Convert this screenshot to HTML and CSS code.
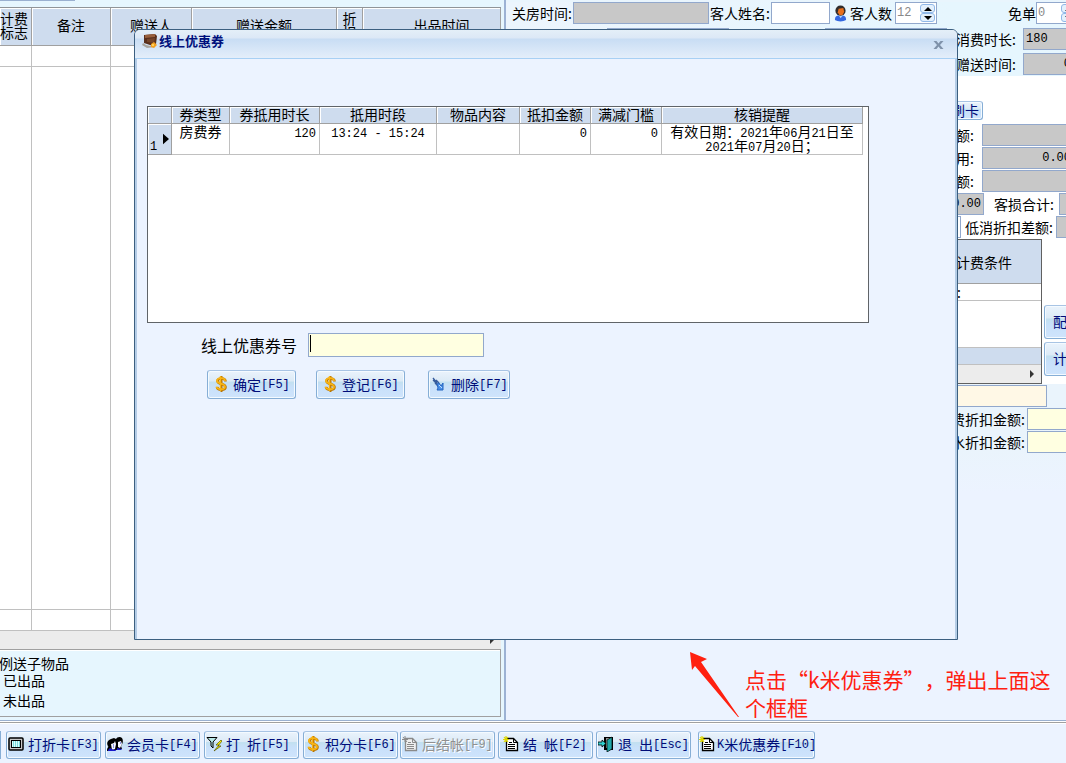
FILE: index.html
```html
<!DOCTYPE html>
<html lang="zh-CN">
<head>
<meta charset="utf-8">
<title>线上优惠券</title>
<link rel="stylesheet" href="styles.css">
</head>
<body>
<svg class="sprite" aria-hidden="true">
  <symbol id="dollar" viewBox="0 0 16 16">
    <path d="M8.500 0v16" stroke="#b87400" stroke-width="2"/>
    <path d="M12.500 5.500C12.500 1.500 4.500 1.500 4.500 5c0 3.500 8 2.500 8 6 0 3.500-8 3.500-8.500 0" fill="none" stroke="#b87400" stroke-width="2.600"/>
    <path d="M7.500 0v15" stroke="#f8b414" stroke-width="1.400"/>
    <path d="M12 5C12 1.300 4 1.300 4 4.700c0 3.500 8 2.500 8 6 0 3.400-8 3.400-8.500 0" fill="none" stroke="#f8b414" stroke-width="1.800"/>
  </symbol>
  <symbol id="erase" viewBox="0 0 16 16">
    <path d="M2 2l4 5M2 4l4 4M4 7l3 3M5 4l3 3" stroke="#355b9c" stroke-width="1.300"/>
    <path d="M6 8l2-1 2 3 2-3v7H6l1-2z" fill="#4a90e8" stroke="#2464c0"/>
    <path d="M8 9l3 3" stroke="#bfe0ff"/>
  </symbol>
  <symbol id="screen" viewBox="0 0 16 16">
    <rect x="1" y="2" width="14" height="12" rx="1" fill="#c8c8c8" stroke="#000" stroke-width="1.500"/>
    <rect x="3.500" y="4.500" width="9" height="7" fill="#d8ffff" stroke="#000"/>
    <path d="M5 6h7M5 8h7M5 10h7" stroke="#20b8b8" stroke-dasharray="1 1"/>
  </symbol>
  <symbol id="people" viewBox="0 0 16 16">
    <path d="M0 14c0-2 2-3 1-4-2-3 0-6 3-7l3-1 2 1c1-2 4-3 6-1 2 3 0 7-1 8l1 3-6 1-9 1z" fill="#000"/>
    <path d="M4 8l3-1 1-2 1 3-1 5-3 1zM11 6l3-1 1 3-2 4-2-1z" fill="#f8f8ff"/>
    <path d="M1 14l2-2 4 2 1-1 1 2H1zM10 12l5 1-1 1h-4z" fill="#1818c8"/>
    <path d="M6 9h1M13 7h1M6 11h1" stroke="#2038d0"/>
  </symbol>
  <symbol id="filter" viewBox="0 0 16 16">
    <path d="M1 1.500h10L7 6v6L5 10V6z" fill="#b8e8e8" stroke="#000"/>
    <path d="M15 4l-5 5h3l-5 6 7-5h-3l4-5z" fill="#ffee00" stroke="#555500" stroke-width=".7"/>
  </symbol>
  <symbol id="doc" viewBox="0 0 16 16">
    <path d="M3.500 2.500h7l4 4v8h-11z" fill="#fff" stroke="#000" stroke-width="1.300"/>
    <path d="M10.500 2v4.500H15M6 6.500h3M5 8.500h7M5 10.500h7M5 12.500h7" fill="none" stroke="#000"/>
    <path d="M0 3.500h6M3 0v6M1 1l4 5M5 1L1 6" stroke="#e0d800" stroke-width="1.200"/>
  </symbol>
  <symbol id="doc-off" viewBox="0 0 16 16">
    <path d="M3.500 2.500h7l4 4v8h-11z" fill="#f0f0f0" stroke="#8a8a8a" stroke-width="1.300"/>
    <path d="M10.500 2v4.500H15M6 6.500h3M5 8.500h7M5 10.500h7M5 12.500h7M0 3.500h6M3 0v6M1 1l4 5" fill="none" stroke="#8a8a8a"/>
  </symbol>
  <symbol id="exit" viewBox="0 0 16 16">
    <path d="M6 1h9v13H6z" fill="#000"/>
    <path d="M8 2h5v10H8z" fill="#909090"/>
    <path d="M9 4l5-3v12l-5 3z" fill="#20a8a8" stroke="#000" stroke-width=".7"/>
    <path d="M0 6h4V4l4 3.500L4 11V9H0z" fill="#30d0d0" stroke="#000" stroke-width=".8"/>
  </symbol>
  <symbol id="person" viewBox="0 0 14 18">
    <path d="M1 16c0-4 2-5 6-5s6 1 6 5c-3 2-9 2-12 0z" fill="#3468e0"/>
    <path d="M5 11l2 3 3-3z" fill="#a8d0ff"/>
    <circle cx="7" cy="6" r="5.500" fill="#302c2c"/>
    <path d="M5 4l5-1 1 4-2 4H6L4 8z" fill="#e8701c"/>
  </symbol>
  <symbol id="wallet" viewBox="0 0 16 16">
    <path d="M1 10l3 2 9 2-8 1-5-3z" fill="#a8a49c"/>
    <path d="M2 2l11-1 2 2-1 8-3 2-9-3z" fill="#59301c"/>
    <path d="M3 2l10-1v3L3 5z" fill="#99603c"/>
    <path d="M5 6l8-1-1 5-7-1z" fill="#75452a"/>
    <path d="M9 11l3-2 3 3-3 3-3-1z" fill="#f4a020"/>
    <circle cx="11" cy="12" r="1" fill="#ffe070"/>
  </symbol>
</svg>

<main class="workspace">
  <section class="orders">
    <div class="strip"></div>
    <table class="order-table">
      <colgroup><col class="o-flag"><col class="o-note"><col class="o-who"><col class="o-sum"><col class="o-cut"><col></colgroup>
      <thead><tr><th class="flag">计费<br>标志</th><th>备注</th><th>赠送人</th><th>赠送金额</th><th>折<br>扣</th><th class="served">出品时间</th></tr></thead>
      <tbody>
        <tr class="slim"><td></td><td></td><td></td><td></td><td></td><td></td></tr>
        <tr><td></td><td></td><td></td><td></td><td></td><td></td></tr>
        <tr class="slim"><td></td><td></td><td></td><td></td><td></td><td></td></tr>
      </tbody>
    </table>
    <div class="scroll"><svg viewBox="0 0 6 8"><path d="M1 0l4 4-4 4z"/></svg></div>
    <div class="legend"><p class="first">例送子物品</p><p>已出品</p><p>未出品</p></div>
  </section>

  <section class="bill">
    <div class="guest">
      <label for="close">关房时间:</label><input id="close" class="box grey close" readonly>
      <label for="name">客人姓名:</label><input id="name" class="box name">
      <svg class="person"><use href="#person"/></svg>
      <label for="count">客人数</label>
      <span class="box spin"><input id="count" value="12"><span class="steps"><button class="up" aria-label="增加"></button><button class="down" aria-label="减少"></button></span></span>
      <label for="free" class="push">免单</label>
      <span class="box spin"><input id="free" value="0"><span class="steps"><button class="up" aria-label="增加"></button><button class="down" aria-label="减少"></button></span></span>
    </div>
    <div class="times">
      <div class="under"><input class="box grey" aria-label="时间" readonly><input class="box grey" aria-label="时长" readonly></div>
      <div class="line wide"><label for="used">消费时长:</label><input id="used" class="box grey" value="180" readonly></div>
      <div class="line wide"><label for="gift">赠送时间:</label><input id="gift" class="box grey num" value="0" readonly></div>
    </div>
    <div class="sums">
      <div class="line"><button class="btn swipe">刷卡</button></div>
      <div class="line mid"><label for="s1">额:</label><input id="s1" class="box grey" readonly></div>
      <div class="line mid"><label for="s2">用:</label><input id="s2" class="box grey num" value="0.00" readonly></div>
      <div class="line mid"><label for="s3">额:</label><input id="s3" class="box grey" readonly></div>
      <div class="line"><input class="box grey num lead" aria-label="合计" value="0.00" readonly><label for="s4" class="after">客损合计:</label><input id="s4" class="box grey" readonly></div>
      <div class="line"><input class="box lead short" aria-label="差额"><label for="s5" class="after tight">低消折扣差额:</label><input id="s5" class="box grey" readonly></div>
      <div class="rules">
        <div class="rule-box">
          <table class="rule-table">
            <thead><tr><th>计费条件</th></tr></thead>
            <tbody><tr class="thin"><td>:</td></tr><tr><td></td></tr><tr class="thin tint"><td></td></tr></tbody>
          </table>
          <div class="scroll"><svg viewBox="0 0 6 8"><path d="M1 0l4 4-4 4z"/></svg></div>
        </div>
        <div class="side"><button class="btn">配</button><button class="btn">计</button></div>
      </div>
    </div>
    <div class="discounts">
      <div class="line"><input class="box cream" aria-label="折扣"></div>
      <div class="line wide"><label for="d1">费折扣金额:</label><input id="d1" class="box yellow"></div>
      <div class="line wide"><label for="d2">水折扣金额:</label><input id="d2" class="box yellow"></div>
    </div>
  </section>
</main>

<nav class="toolbar">
  <span class="stub"></span>
  <div class="group">
    <button class="btn"><svg><use href="#screen"/></svg>打折卡<kbd>[F3]</kbd></button>
    <button class="btn"><svg><use href="#people"/></svg>会员卡<kbd>[F4]</kbd></button>
    <button class="btn"><svg><use href="#filter"/></svg>打<i></i>折<kbd>[F5]</kbd></button>
    <button class="btn"><svg><use href="#dollar"/></svg>积分卡<kbd>[F6]</kbd></button>
  </div>
  <div class="group">
    <button class="btn" disabled><svg><use href="#doc-off"/></svg>后结帐<kbd>[F9]</kbd></button>
    <button class="btn roomy"><svg><use href="#doc"/></svg>结<i></i>帐<kbd>[F2]</kbd></button>
    <button class="btn"><svg><use href="#exit"/></svg>退<i></i>出<kbd>[Esc]</kbd></button>
  </div>
  <button class="btn last"><svg><use href="#doc"/></svg><kbd>K</kbd>米优惠券<kbd>[F10]</kbd></button>
</nav>

<section class="dialog" role="dialog" aria-labelledby="title">
  <header class="titlebar">
    <svg class="wallet"><use href="#wallet"/></svg><h1 id="title">线上优惠券</h1>
    <button class="close-btn" aria-label="关闭"><svg viewBox="0 0 10 10"><path d="M0 1h3l2 2.500L7 1h3L6.500 5 10 9H7L5 6.500 3 9H0l3.500-4z"/></svg></button>
  </header>
  <div class="content">
    <div class="coupon-box">
      <table class="coupons">
        <colgroup><col class="c-mark"><col class="c-kind"><col class="c-len"><col class="c-span"><col class="c-item"><col class="c-cut"><col class="c-min"><col></colgroup>
        <thead><tr><th></th><th>券类型</th><th>券抵用时长</th><th>抵用时段</th><th>物品内容</th><th>抵扣金额</th><th>满减门槛</th><th>核销提醒</th></tr></thead>
        <tbody><tr>
          <th><div class="mark"><b>1</b><svg viewBox="0 0 7 12"><path d="M0 0l7 6-7 6z"/></svg></div></th>
          <td>房费券</td><td class="right"><b>120</b></td><td><b>13:24 - 15:24</b></td><td></td><td class="right"><b>0</b></td><td class="right"><b>0</b></td>
          <td><div class="tip">有效日期：<b>2021</b>年<b>06</b>月<b>21</b>日至<br><b>2021</b>年<b>07</b>月<b>20</b>日；</div></td>
        </tr></tbody>
      </table>
    </div>
    <form class="entry" onsubmit="return false">
      <div class="field"><label for="code">线上优惠券号</label><span class="code-wrap"><input id="code" class="box yellow"></span></div>
      <div class="actions">
        <button class="btn"><svg><use href="#dollar"/></svg>确定<kbd>[F5]</kbd></button>
        <button class="btn"><svg><use href="#dollar"/></svg>登记<kbd>[F6]</kbd></button>
        <button class="btn erase"><svg><use href="#erase"/></svg>删除<kbd>[F7]</kbd></button>
      </div>
    </form>
  </div>
</section>

<svg class="arrow" viewBox="0 0 50 66"><path d="M0 0l17 7-6 3 38 55-1 0L5 14l-3 4z"/></svg>
<p class="note">点击“k米优惠券”，弹出上面这个框框</p>
</body>
</html>
```

FILE: styles.css
```css
* { box-sizing: border-box; }
body {
  margin: 0;
  height: 100vh;
  display: flex;
  flex-direction: column;
  position: relative;
  overflow: hidden;
  background: #ecf3ff;
  color: #000;
  font: 14px/14px "Noto Sans CJK SC", sans-serif;
}
input, button { font: inherit; margin: 0; }
p, h1 { margin: 0; }
kbd, b, input { font: 12px/14px "Liberation Mono", monospace; }
table { border-collapse: separate; border-spacing: 0; table-layout: fixed; }
th, td { padding: 0; font-weight: inherit; }
.sprite { position: absolute; width: 0; height: 0; }

.workspace { flex: 1; display: flex; min-height: 0; }

/* order list */
.orders {
  flex: 0 0 504px;
  display: flex;
  flex-direction: column;
  min-height: 0;
  padding: 0 3px 3px 0;
  background: #e6f6fe;
}
.strip { height: 7px; }
.strip::before { content: ""; display: block; width: 75px; height: 1px; background: #9ab0d0; }
.order-table { flex: 1; width: 100%; background: #fff; border-top: 1px solid #909498; }
.o-flag { width: 32px; }
.o-note { width: 79px; }
.o-who { width: 81px; }
.o-sum { width: 145px; }
.o-cut { width: 26px; }
.order-table th {
  height: 38px;
  padding-bottom: 3px;
  background: #cedcee;
  border-right: 1px solid #a0a0a0;
  border-bottom: 1px solid #a0a0a0;
  box-shadow: inset 1px 1px #fff;
  white-space: nowrap;
}
.order-table .flag { padding-right: 4px; }
.order-table .served { padding-left: 20px; }
.order-table td { border-right: 1px solid #c0c0c0; border-bottom: 1px solid #c0c0c0; }
.slim { height: 21px; }
.scroll {
  height: 18px;
  display: flex;
  align-items: center;
  justify-content: flex-end;
  padding-right: 6px;
  background: #ececec;
}
.scroll svg { width: 6px; height: 8px; fill: #333; }
.legend {
  height: 68px;
  padding: 6px 3px 0;
  border: 1px solid #a0a0a0;
  border-left: 0;
  box-shadow: inset 0 1px #fff;
}
.legend p { margin-bottom: 6px; }
.legend .first { margin: 0 0 3px -4px; }

/* bill panel */
.bill {
  flex: 1;
  min-width: 0;
  overflow: hidden;
  padding-top: 2px;
  border-left: 2px solid #9cb2d4;
  background: linear-gradient(#e9f5fd 0, #e9f5fd 24px, #ecf3ff 24px);
}
.box { height: 22px; border: 1px solid #92a8cc; border-radius: 0; background: #fff; padding: 0 2px 1px; min-width: 0; outline: 0; }
.grey { background: #c8c8c8; }
.yellow { background: #ffffe1; }
.cream { background: #fff8e6; }
.num { text-align: right; }
.guest, .times { background: linear-gradient(90deg, #ecf5fd, #e6f6fe 80%); }
.guest { display: flex; align-items: center; height: 22px; padding-left: 6px; white-space: nowrap; }
.guest label { width: 61px; flex: none; padding-bottom: 1px; }
.close { width: 136px; }
.guest .name { width: 59px; flex: none; }
.guest .name, .guest .close { margin-right: 1px; }
.person { width: 13px; height: 17px; margin: 0 3px; flex: none; }
.guest .person + label { width: 45px; }
.guest label.push { width: 28px; margin-left: auto; }
.spin { display: flex; flex: none; width: 42px; padding: 1px; }
.guest .push + .spin { margin-right: -12px; }
.spin input { flex: 1; min-width: 0; border: 0; padding: 0; color: #888; background: #fff; outline: 0; }
.steps { display: flex; flex-direction: column; width: 15px; }
.steps button {
  flex: 1;
  display: flex;
  align-items: center;
  justify-content: center;
  min-height: 0;
  padding: 0;
  border: 1px solid #90b8e8;
  border-radius: 3px;
  background: #e4f0fc;
}
.steps button::before { content: ""; border: 4px solid transparent; }
.steps .up::before { border-top: 0; border-bottom-color: #000; }
.steps .down::before { border-bottom: 0; border-top-color: #000; }
.times { display: flex; flex-direction: column; gap: 3px; padding: 4px 0 1px; position: relative; }
.under { position: absolute; left: 101px; top: 4px; display: flex; gap: 96px; }
.under .box { width: 122px; }
.line { display: flex; align-items: center; width: 160px; height: 22px; margin-left: auto; white-space: nowrap; }
.line label { flex: none; text-align: right; padding-bottom: 1px; }
.line .box { flex: 1; margin-right: -8px; }
.line.wide label { width: 117px; padding-right: 7px; }
.line.mid label { width: 76px; padding-right: 8px; }
.sums { display: flex; flex-direction: column; gap: 1px; padding-top: 25px; background: #fff; }
.line .lead { flex: 0 0 78px; margin: 0; }
.line .short { flex: 0 0 55px; }
.line .after { width: 75px; padding-right: 5px; }
.line .after.tight { width: 95px; padding-right: 3px; }
.rules { display: flex; width: 160px; margin-left: auto; gap: 2px; }
.rule-box { flex: 0 0 136px; height: 145px; border: 1px solid #606060; display: flex; flex-direction: column; }
.rule-table { width: 100%; flex: 1; }
.rule-table th { height: 44px; background: #cedcee; border-bottom: 1px solid #a0a0a0; padding-left: 20px; }
.rule-table td { border-bottom: 1px solid #c0c0c0; padding-left: 50px; }
.thin { height: 17px; }
.tint { background: #cedcee; }
.side { display: flex; flex-direction: column; gap: 3px; padding-top: 66px; }
.discounts { display: flex; flex-direction: column; gap: 1px; padding: 1px 0 40px; background: linear-gradient(#eaf4fc 60%, #ecf3ff); }
.discounts .line:first-child .box { margin-right: 19px; }
.discounts .line.wide label { width: 121px; padding-right: 2px; }

/* buttons */
.btn {
  display: flex;
  align-items: center;
  padding: 0 1px 2px;
  border: 1px solid #86aed6;
  border-top-color: #a8c4e4;
  border-radius: 3px;
  background: linear-gradient(#eaf3fc, #dceaf6 38%, #c2e0f0 40%, #c8e0fa 60%, #cfe4fc);
  box-shadow: inset 0 0 0 1px #f4faff;
  color: #000c78;
  white-space: nowrap;
}
.btn svg { width: 16px; height: 16px; margin-right: 4px; flex: none; }
.btn kbd { padding-top: 2px; }
.btn i { width: 7px; }
.btn:disabled { color: #909090; text-shadow: 1px 1px #fff; }
.line .swipe { height: 19px; width: 37px; margin-left: 40px; padding: 0 4px 1px; align-self: flex-start; }
.side .btn { width: 60px; height: 34px; padding-left: 8px; }

.toolbar {
  display: flex;
  flex: none;
  height: 43px;
  padding-top: 10px;
  border-top: 1px solid #9ab0d0;
  box-shadow: inset 0 1px #fff, inset 0 2px #a0a0a0, inset 0 3px #fff;
}
.toolbar .btn { width: 95px; height: 28px; }
.group { display: flex; gap: 4px; margin-right: 2px; }
.group + .group { gap: 3px; margin-right: 7px; }
.toolbar .roomy { padding-left: 4px; }
.toolbar .last { width: 117px; padding: 0 0 2px; }
.toolbar .last svg { margin-right: 2px; }
.stub { width: 1px; height: 28px; background: #86aed6; margin-right: 5px; }

/* coupon dialog */
.dialog {
  position: absolute;
  left: 134px;
  right: 108px;
  top: 29px;
  bottom: 123px;
  display: flex;
  flex-direction: column;
  border: 1px solid #3c5f80;
  border-radius: 6px 6px 0 0;
  background: #ecf3ff;
  overflow: hidden;
}
.titlebar {
  display: flex;
  align-items: center;
  flex: none;
  height: 29px;
  padding: 0 13px 7px 7px;
  border-bottom: 1px solid #a8d0f4;
  background: linear-gradient(#e4eff8 0, #dce8f6 8px, #c8ddf4 9px, #e4eefa);
}
.titlebar h1 { font: bold 13px/14px "Noto Sans CJK SC", sans-serif; color: #00107c; }
.wallet { width: 16px; height: 16px; margin-right: 1px; }
.close-btn { margin: 9px 0 0 auto; padding: 0; border: 0; background: none; height: 10px; }
.close-btn svg { display: block; width: 11px; height: 10px; fill: #7f92aa; }
.content { flex: 1; padding: 47px 86px 0 10px; border: solid #b4cce6; border-width: 0 2px; }
.coupon-box { height: 217px; border: 1px solid #606468; background: #fff; padding-right: 5px; }
.coupons { width: 100%; text-align: center; }
.c-mark { width: 24px; }
.c-kind { width: 58px; }
.c-len { width: 90px; }
.c-span { width: 117px; }
.c-item { width: 83px; }
.c-cut, .c-min { width: 71px; }
.coupons th {
  height: 17px;
  padding-bottom: 2px;
  background: #cedcee;
  border-right: 1px solid #a0a0a0;
  border-bottom: 1px solid #a0a0a0;
  box-shadow: inset 1px 1px #fff;
}
.coupons tbody th { padding: 0; }
.coupons td { height: 31px; vertical-align: top; border-right: 1px solid #c0c0c0; border-bottom: 1px solid #c0c0c0; }
.coupons td b { line-height: 0; }
.coupons td.right { text-align: right; padding-right: 3px; }
.tip { height: 30px; overflow: hidden; }
.mark { display: flex; align-items: center; justify-content: space-between; height: 30px; padding: 0 2px; }
.mark b { align-self: flex-end; }
.mark svg { width: 6px; height: 12px; }
.entry { padding: 10px 0 0 54px; }
.field { display: flex; align-items: center; gap: 11px; font-size: 16px; }
.field .box { width: 176px; height: 24px; display: block; }
.code-wrap { position: relative; }
.code-wrap::after { content: ""; position: absolute; left: 2px; top: 2px; width: 1px; height: 17px; background: #000; }
.actions { display: flex; gap: 20px; padding: 13px 0 0 6px; }
.actions .btn { width: 89px; height: 29px; padding-left: 5px; }
.actions .erase { width: 82px; margin-left: 3px; padding-left: 2px; }

/* callout */
.arrow { position: absolute; left: 690px; top: 652px; width: 50px; height: 66px; fill: #ff2010; }
.note {
  position: absolute;
  left: 745px;
  top: 665px;
  width: 310px;
  color: #ff2010;
  font-size: 21px;
  line-height: 28px;
  text-spacing-trim: space-all;
}
```
